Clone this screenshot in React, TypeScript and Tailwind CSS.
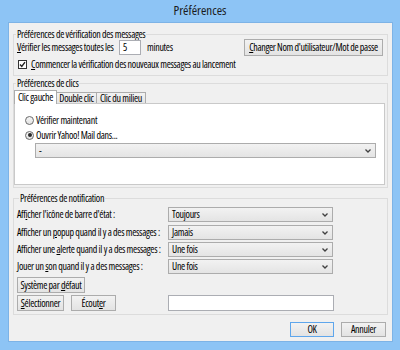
import type { ReactNode } from 'react';

function Chevron() {
    return (
        <svg width="6" height="4" viewBox="0 0 6 4" className="shrink-0">
            <path d="M0.5 0.5 L3 3 L5.5 0.5" fill="none" stroke="#404040" strokeWidth="1.3" />
        </svg>
    );
}

function Combo({ value, className }: { value: string; className: string }) {
    return (
        <div
            className={`flex items-center justify-between pl-[3px] pr-[4px] border border-[#acacac] bg-gradient-to-b from-[#f2f2f2] to-[#e4e4e4] ${className}`}
        >
            <span>{value}</span>
            <Chevron />
        </div>
    );
}

function Btn({ children, className }: { children: ReactNode; className: string }) {
    return (
        <button
            className={`flex items-center justify-center border border-[#acacac] bg-gradient-to-b from-[#f2f2f2] to-[#e3e3e3] ${className}`}
        >
            {children}
        </button>
    );
}

function Group({ title, className, children }: { title: string; className: string; children: ReactNode }) {
    return (
        <fieldset className={`border border-[#dcdcdc] ${className}`}>
            <legend className="ml-[2px] px-[1px] leading-[10px]">{title}</legend>
            {children}
        </fieldset>
    );
}

function Radio({ checked }: { checked?: boolean }) {
    return (
        <span className="w-[9px] h-[9px] rounded-full border border-[#6a6a6a] bg-gradient-to-b from-[#f6f6f6] to-[#e2e2e2] flex items-center justify-center shrink-0">
            {checked && <span className="w-[4px] h-[4px] rounded-full bg-[#2a2a2a]" />}
        </span>
    );
}

const rows: [ReactNode, string, string][] = [
    [<>Aff<u>i</u>cher l'icône de barre d'état :</>, 'Toujours', 'mt-[4px]'],
    [<>Afficher un <u>p</u>opup quand il y a des messages :</>, 'Jamais', 'mt-[3px]'],
    [<>Afficher une <u>a</u>lerte quand il y a des messages :</>, 'Une fois', 'mt-[2px]'],
    [<>Jouer un <u>s</u>on quand il y a des messages :</>, 'Une fois', 'mt-[2px]'],
];

export default function App() {
    return (
        <div className="w-[400px] h-[350px] bg-[#8dc4f5] flex flex-col overflow-hidden font-['Open_Sans',sans-serif] font-stretch-condensed text-[10px] tracking-[-0.3px] text-black">
            <div className="h-[22px] shrink-0 flex items-center justify-center text-[13px] tracking-normal text-[#1a1a1a]">
                Préférences
            </div>

            <div className="flex-1 ml-[8px] mr-[7px] mb-[8px] border border-[#7db3e6] bg-[#f0f0f0] flex flex-col px-[4px] pt-[6px]">
                {/* vérification */}
                <Group title="Préférences de vérification des messages" className="pb-[5px]">
                    <div className="flex items-center h-[18px] -mt-[1px] pl-[3px] pr-[4px]">
                        <span className="w-[102px] shrink-0 whitespace-nowrap">
                            <u>V</u>érifier les messages toutes les
                        </span>
                        <div className="w-[22px] h-[15px] border border-[#abadb3] bg-white pl-[3px] flex items-center">5</div>
                        <span className="ml-[6px]">minutes</span>
                        <Btn className="ml-auto w-[139px] h-[17px]">
                            <span>
                                <u>C</u>hanger Nom d'utilisateur/Mot de passe
                            </span>
                        </Btn>
                    </div>
                    <div className="flex items-center gap-[4px] h-[12px] mt-[2px] pl-[4px]">
                        <span className="w-[9px] h-[9px] border border-[#333] bg-white flex items-center justify-center shrink-0">
                            <svg width="7" height="7" viewBox="0 0 7 7">
                                <path d="M1 3.5 L2.8 5.5 L6 1.2" fill="none" stroke="#222" strokeWidth="1.4" />
                            </svg>
                        </span>
                        <span className="whitespace-nowrap">
                            <u>C</u>ommencer la vérification des nouveaux messages au lancement
                        </span>
                    </div>
                </Group>

                {/* clics */}
                <Group title="Préférences de clics" className="mt-[2px] pb-[2px] pr-[2px]">
                    <div className="flex items-end h-[12px] mt-[3px]">
                        <div className="relative z-10 w-[43px] h-[14px] -mb-px border border-b-0 border-[#acacac] bg-white flex items-center justify-center">
                            Clic gauche
                        </div>
                        <div className="w-[40px] h-[11px] border border-l-0 border-b-0 border-[#acacac] bg-gradient-to-b from-[#f2f2f2] to-[#e5e5e5] flex items-center justify-center">
                            Double clic
                        </div>
                        <div className="w-[49px] h-[11px] border border-l-0 border-b-0 border-[#acacac] bg-gradient-to-b from-[#f2f2f2] to-[#e5e5e5] flex items-center justify-center">
                            Clic du milieu
                        </div>
                    </div>
                    <div className="h-[82px] border border-[#c9c9c9] bg-white pl-[10px] pt-[10px]">
                        <div className="flex items-center gap-[2px] h-[12px]">
                            <Radio />
                            <span>Vérifier maintenant</span>
                        </div>
                        <div className="flex items-center gap-[2px] h-[12px] mt-[3px]">
                            <Radio checked />
                            <span>Ouvrir Yahoo! Mail dans...</span>
                        </div>
                        <Combo value="-" className="ml-[10px] mt-[2px] w-[341px] h-[15px]" />
                    </div>
                </Group>

                {/* notification */}
                <Group title="Préférences de notification" className="mt-[5px] pb-[3px] pl-[3px]">
                    {rows.map(([label, value, mt], i) => (
                        <div key={i} className={`flex items-center h-[15px] ${mt}`}>
                            <span className="w-[151px] shrink-0 whitespace-nowrap">{label}</span>
                            <Combo value={value} className="w-[165px] h-[15px]" />
                        </div>
                    ))}
                    <Btn className="mt-[3px] w-[68px] h-[16px]">
                        <span>
                            Système par <u>d</u>éfaut
                        </span>
                    </Btn>
                    <div className="flex items-center mt-[2px] h-[16px]">
                        <div className="w-[151px] flex gap-[7px] shrink-0">
                            <Btn className="w-[47px] h-[16px]">
                                <span>
                                    <u>S</u>électionner
                                </span>
                            </Btn>
                            <Btn className="w-[45px] h-[16px]">
                                <span>
                                    Écout<u>e</u>r
                                </span>
                            </Btn>
                        </div>
                        <div className="w-[166px] h-[16px] border border-[#abadb3] bg-white" />
                    </div>
                </Group>

                <div className="flex justify-end gap-[7px] mt-[7px] mr-[2px]">
                    <Btn className="w-[44px] h-[15px] !border-[#5ea6ec]">OK</Btn>
                    <Btn className="w-[45px] h-[15px]">Annuler</Btn>
                </div>
            </div>
        </div>
    );
}
